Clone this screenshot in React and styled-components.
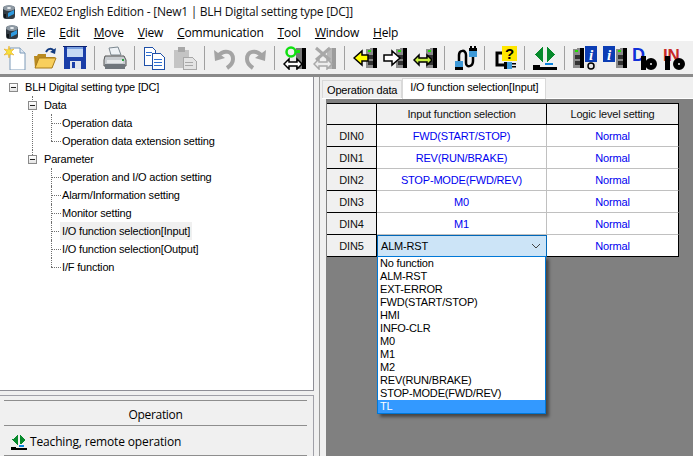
import React from 'react';
import styled, { createGlobalStyle } from 'styled-components';

const GlobalStyle = createGlobalStyle`
  html, body {
    margin: 0;
    padding: 0;
    width: 693px;
    height: 456px;
    overflow: hidden;
    background: #fff;
  }
  * {
    box-sizing: border-box;
  }
`;

const uiFont = `'Liberation Sans', Arial, sans-serif`;
const chromeFont = `'Open Sans', 'Noto Sans', sans-serif`;

const Page = styled.div`
  width: 693px;
  height: 456px;
  display: flex;
  flex-direction: column;
  font-family: ${uiFont};
  font-size: 11px;
  letter-spacing: -0.18px;
  color: #000;
  overflow: hidden;
`;

const TitleBar = styled.div`
  height: 23px;
  display: flex;
  align-items: center;
  gap: 3px;
  padding-left: 1px;
  font-family: ${chromeFont};
  font-size: 12px;
  letter-spacing: -0.26px;
  color: #111;
`;

const MenuBar = styled.div`
  height: 18px;
  display: flex;
  align-items: center;
  padding-left: 4px;
  font-family: ${chromeFont};
  font-size: 12px;
  letter-spacing: -0.2px;
`;

const MenuLogo = styled.div`
  width: 23px;
  display: flex;
`;

const MenuItems = styled.div`
  display: flex;
  gap: 14px;
`;

const Toolbar = styled.div`
  height: 33px;
  display: flex;
  align-items: center;
  background: #f0f0f0;
`;

const ToolButton = styled.div`
  width: 30px;
  height: 32px;
  display: flex;
  align-items: center;
  justify-content: center;
`;

const ToolSeparator = styled.div`
  width: 10px;
  height: 24px;
  display: flex;
  justify-content: center;
  padding-right: 2px;

  &::before {
    content: '';
    width: 1px;
    background: #a0a0a0;
  }
`;

const Body = styled.div`
  flex: 1;
  min-height: 0;
  display: flex;
  border-top: 3px solid #8a8a8a;
  background: #f0f0f0;
`;

const LeftPane = styled.div`
  width: 314px;
  display: flex;
  flex-direction: column;
`;

const TreePanel = styled.div`
  height: 314px;
  background: #fff;
  border-right: 1px solid #8e8e96;
  border-bottom: 1px solid #8e8e96;
  padding: 1px 0 0 9px;
`;

const TreeList = styled.ul`
  list-style: none;
  margin: 0;
  padding: 0;
`;

const TreeChildren = styled(TreeList)`
  margin-left: ${(p) => p.$indent}px;
`;

const TreeItem = styled.li`
  position: relative;

  &::before {
    content: '';
    position: absolute;
    left: 0;
    top: 9px;
    width: ${(p) => p.$tick}px;
    border-top: 1px dotted #707070;
  }

  &::after {
    content: '';
    position: absolute;
    left: 0;
    top: 0;
    bottom: 0;
    border-left: 1px dotted #707070;
  }

  &:last-child::after {
    bottom: auto;
    height: 9px;
  }
`;

const TreeRoot = styled.li`
  position: relative;
`;

const TreeRow = styled.div`
  position: relative;
  z-index: 1;
  height: 18px;
  display: flex;
  align-items: center;
  padding-left: ${(p) => p.$pad}px;
`;

const TreeExpander = styled.span`
  width: 9px;
  height: 9px;
  margin-right: ${(p) => p.$gap}px;
  margin-left: ${(p) => p.$offset || 0}px;
  border: 1px solid #8a8a8a;
  background: linear-gradient(#fff, #e4e4e4);
  display: flex;
  align-items: center;
  justify-content: center;
  flex: none;

  &::before {
    content: '';
    width: 5px;
    height: 1px;
    background: #222;
  }
`;

const TreeLabel = styled.span`
  height: 18px;
  line-height: 18px;
  padding: 0 2px;
  white-space: nowrap;
  background: ${(p) => (p.$selected ? '#f0f0f0' : 'transparent')};
`;

const Footer = styled.div`
  flex: 1;
  margin-top: 4px;
  padding: 4px 6px 0 4px;
  border-top: 1px solid #a0a0a8;
  border-right: 1px solid #a0a0a8;
`;

const FooterHeading = styled.div`
  height: 26px;
  padding-top: 3px;
  border-top: 1px solid #8e8e8e;
  border-bottom: 1px solid #8e8e8e;
  display: flex;
  align-items: center;
  justify-content: center;
  font-family: ${chromeFont};
  font-size: 12px;
  letter-spacing: -0.3px;
`;

const FooterAction = styled.div`
  height: 30px;
  padding: 2px 0 0 7px;
  display: flex;
  align-items: center;
  gap: 3px;
  border-bottom: 1px solid #8e8e8e;
  font-family: ${chromeFont};
  font-size: 12px;
  letter-spacing: -0.15px;
`;

const Splitter = styled.div`
  width: 6px;
  background: #f0f0f0;
  border-right: 1px solid #9a9a9a;
`;

const RightPane = styled.div`
  flex: 1;
  display: flex;
  flex-direction: column;
  padding-left: 2px;
`;

const TabStrip = styled.div`
  height: 22px;
  display: flex;
  align-items: flex-end;
  background: #f0f0f0;
  border-bottom: 1px solid #fff;
`;

const Tab = styled.div`
  height: ${(p) => (p.$active ? 21 : 18)}px;
  padding: ${(p) => (p.$active ? '0 7px 4px' : '0 4px')};
  margin-bottom: ${(p) => (p.$active ? -1 : 0)}px;
  display: flex;
  align-items: center;
  background: ${(p) => (p.$active ? '#fff' : '#f0f0f0')};
  border: 1px solid #d9d9d9;
  border-bottom: none;
  white-space: nowrap;
`;

const Workspace = styled.div`
  flex: 1;
  margin-left: 4px;
  padding: 4px 0 0 1px;
  background: #808080;
`;

const Table = styled.div`
  width: 352px;
  display: grid;
  grid-template-columns: 50px 170px 132px;
  grid-template-rows: 21px;
  grid-auto-rows: 22px;
  border-top: 1px solid #000;
`;

const Cell = styled.div`
  position: relative;
  display: flex;
  align-items: center;
  justify-content: center;
  white-space: nowrap;
  background: #fff;
  color: #0000f0;
  border-right: 1px solid #c0c0c0;
  border-bottom: 1px solid ${(p) => (p.$last ? '#000' : '#c0c0c0')};
`;

const LevelCell = styled(Cell)`
  border-right-color: #000;
`;

const HeaderCell = styled(Cell)`
  background: #f0f0f0;
  color: #111;
  border-right: 1px solid #000;
  border-bottom: 1px solid #000;
`;

const RowHeader = styled(HeaderCell)``;

const ComboCell = styled(Cell)`
  justify-content: space-between;
  padding: 0 5px 0 3px;
  color: #000;
  background: #cce4f7;
  border: 1px solid #0067b8;
  overflow: visible;
`;

const Dropdown = styled.div`
  position: absolute;
  z-index: 5;
  left: -1px;
  top: 20px;
  width: 169px;
  border: 1px solid #0078d7;
  background: #fff;
  box-shadow: 3px 3px 3px rgba(0, 0, 0, 0.45);
`;

const DropdownItem = styled.div`
  height: 13px;
  line-height: 13px;
  padding-left: 2px;
  color: ${(p) => (p.$selected ? '#fff' : '#000')};
  background: ${(p) => (p.$selected ? '#3399ff' : 'transparent')};
`;

/* toolbar pictures, all drawn on a 24x24 grid */

const Device = ({ x = 0, dark = '#000', body = '#8c8c8c', led = '#22e000' }) => (
  <g transform={`translate(${x} 0)`} shapeRendering="crispEdges">
    <path d="M3 3h4v-1h7v20H3z" fill={body} />
    <rect x="10" y="2" width="4" height="20" fill={dark} />
    <rect x="5" y="4" width="3" height="2" fill={led} />
    <rect x="5" y="9" width="5" height="4" fill="#333" />
    <rect x="5" y="15" width="5" height="4" fill="#333" />
  </g>
);

const Motor = ({ size = 16 }) => (
  <svg width={size} height={size} viewBox="0 0 16 16">
    <rect x="2" y="2" width="12" height="13" rx="3" fill="#333c44" />
    <ellipse cx="8" cy="4" rx="6" ry="3" fill="#8d98a2" />
    <ellipse cx="8" cy="4" rx="2" ry="1" fill="#eef2f5" />
    <path d="M7 9l6-3v4l-6 3z" fill="#2f9be0" />
    <rect x="3" y="10" width="2" height="4" fill="#10161a" />
  </svg>
);

const TeachIcon = ({ size = 24 }) => (
  <svg width={size} height={size} viewBox="0 0 24 24" shapeRendering="crispEdges">
    <path d="M10 1v15L2 8.500z" fill="#078a2c" />
    <path d="M14 1v15l8-7.500z" fill="#078a2c" />
    <rect x="12" y="17" width="8" height="2" fill="#0a84e0" />
    <rect x="0" y="19" width="7" height="5" fill="#000" />
    <rect x="7" y="21" width="17" height="3" fill="#000" />
  </svg>
);

const icons = {
  fresh: (
    <>
      <path d="M7 2h10l5 5v17H7z" fill="#fff" stroke="#7c9ab8" />
      <path d="M17 2v5h5" fill="#dfe8f2" stroke="#7c9ab8" />
      <path d="M6 0l1 4 4-1-3 3 3 3-4-1-1 4-1-4-4 1 3-3-3-3 4 1z" fill="#f6e03a" stroke="#e4a010" strokeWidth="0.5" />
    </>
  ),
  open: (
    <>
      <path d="M2 22L1 10h3l1-2h8v3h9l-3 11z" fill="#b98a20" />
      <path d="M2 22l4-10h17l-4 10z" fill="#f8cf5c" stroke="#a87a18" />
      <path d="M13 6c2-4 6-4 8-1" fill="none" stroke="#123a80" strokeWidth="2" />
      <path d="M23 2l-1 6-5-2z" fill="#123a80" />
    </>
  ),
  save: (
    <g shapeRendering="crispEdges">
      <rect x="1" y="1" width="22" height="22" fill="#1a3ea8" />
      <rect x="0" y="0" width="24" height="1" fill="#0b2270" />
      <rect x="4" y="1" width="16" height="10" fill="#c4d8f4" />
      <rect x="4" y="1" width="16" height="2" fill="#7aa0e0" />
      <rect x="7" y="15" width="11" height="8" fill="#dfe4ee" />
      <rect x="9" y="16" width="3" height="6" fill="#1a3ea8" />
    </g>
  ),
  print: (
    <>
      <path d="M6 2l9-1 3 8H8z" fill="#eef2f6" stroke="#7c8890" />
      <path d="M2 10h19l2 4v6H1v-6z" fill="#c8ccd0" stroke="#555" />
      <rect x="2" y="18" width="20" height="5" fill="#70767c" />
      <rect x="4" y="14" width="16" height="3" fill="#e6e8ea" />
      <rect x="19" y="13" width="2" height="2" fill="#2ca040" />
    </>
  ),
  copy: (
    <g shapeRendering="crispEdges">
      <path d="M1 1h8l3 3v15H1z" fill="#fff" stroke="#1f50a8" />
      <path d="M9 7h8l4 4v12H9z" fill="#fff" stroke="#1f50a8" />
      <rect x="3" y="6" width="6" height="1" fill="#2f6fd0" />
      <rect x="3" y="9" width="5" height="1" fill="#2f6fd0" />
      <rect x="11" y="13" width="8" height="1" fill="#2f6fd0" />
      <rect x="11" y="16" width="8" height="1" fill="#2f6fd0" />
      <rect x="11" y="19" width="8" height="1" fill="#2f6fd0" />
    </g>
  ),
  paste: (
    <g shapeRendering="crispEdges">
      <rect x="1" y="4" width="15" height="18" fill="#c4c4c4" />
      <rect x="5" y="1" width="7" height="5" fill="#a8a8a8" />
      <path d="M10 11h9l4 4v8H10z" fill="#e4e4e4" stroke="#a8a8a8" />
      <rect x="12" y="16" width="8" height="1" fill="#a8a8a8" />
      <rect x="12" y="19" width="8" height="1" fill="#a8a8a8" />
    </g>
  ),
  undo: (
    <>
      <path d="M5 10c6-7 15-5 15 3 0 4-3 7-6 9" fill="none" stroke="#a4a4a4" strokeWidth="4" />
      <path d="M1 4l1 11 10-3z" fill="#a4a4a4" />
    </>
  ),
  redo: (
    <>
      <path d="M19 10c-6-7-15-5-15 3 0 4 3 7 6 9" fill="none" stroke="#a4a4a4" strokeWidth="4" />
      <path d="M23 4l-1 11-10-3z" fill="#a4a4a4" />
    </>
  ),
  connect: (
    <>
      <rect x="13" y="2" width="10" height="21" fill="#777" />
      <rect x="19" y="2" width="4" height="21" fill="#000" />
      <rect x="14" y="4" width="3" height="2" fill="#22e000" />
      <circle cx="8" cy="6" r="4.500" fill="none" stroke="#10e010" strokeWidth="2.500" />
      <rect x="12" y="5" width="5" height="2" fill="#10e010" />
      <path d="M1 18l5-5v3h8v-3l5 5-5 5v-3H6v3z" fill="#fff" stroke="#000" strokeWidth="1.500" />
    </>
  ),
  disconnect: (
    <>
      <rect x="14" y="2" width="9" height="21" fill="#b8b8b8" />
      <rect x="19" y="2" width="4" height="21" fill="#9c9c9c" />
      <path d="M3 2l14 12M17 2L3 14" stroke="#a8a8a8" strokeWidth="3" />
      <path d="M1 18l5-5v3h8v-3l5 5-5 5v-3H6v3z" fill="#ececec" stroke="#a8a8a8" strokeWidth="1.500" />
    </>
  ),
  read: (
    <>
      <Device x={10} />
      <path d="M1 12l8-7v4h6v6H9v4z" fill="#ffff00" stroke="#000" strokeWidth="1.500" />
    </>
  ),
  write: (
    <>
      <Device x={10} />
      <path d="M17 12l-8-7v4H1v6h8v4z" fill="#fff" stroke="#000" strokeWidth="1.500" />
    </>
  ),
  compare: (
    <>
      <Device x={10} />
      <path d="M1 14l5-5v3h8V9l5 5-5 5v-3H6v3z" fill="#c8f040" stroke="#000" strokeWidth="1.500" />
    </>
  ),
  cable: (
    <>
      <path d="M6 16V9c0-5 7-6 7 0v8c0 5 7 4 7-2v-6" fill="none" stroke="#000" strokeWidth="2.500" />
      <g shapeRendering="crispEdges">
        <rect x="2" y="15" width="8" height="6" fill="#3f9ad8" />
        <rect x="2" y="21" width="8" height="3" fill="#000" />
        <rect x="16" y="5" width="8" height="6" fill="#3f9ad8" />
        <rect x="16" y="2" width="8" height="3" fill="#000" />
        <rect x="17" y="0" width="2" height="2" fill="#000" />
        <rect x="21" y="0" width="2" height="2" fill="#000" />
      </g>
    </>
  ),
  help: (
    <>
      <path d="M9 7H4v12h8" fill="none" stroke="#000" strokeWidth="3" />
      <rect x="9" y="0" width="15" height="15" fill="#ffe600" />
      <text x="16.500" y="13" textAnchor="middle" fontSize="15" fontWeight="700" fontFamily="'Liberation Sans', sans-serif">?</text>
      <rect x="11" y="16" width="8" height="7" fill="#000" />
      <rect x="14" y="16" width="5" height="7" fill="#3f9ad8" />
      <rect x="19" y="17" width="4" height="1.500" fill="#000" />
      <rect x="19" y="20" width="4" height="1.500" fill="#000" />
    </>
  ),
  teach: <TeachIcon />,
  monitor: (
    <>
      <Device x={-3} />
      <rect x="12" y="0" width="12" height="16" fill="#0b3db4" />
      <text x="18" y="14" textAnchor="middle" fontSize="15" fontWeight="700" fontStyle="italic" fill="#fff" fontFamily="'Liberation Serif', serif">i</text>
      <rect x="12" y="16" width="12" height="8" fill="#e8e8e8" />
      <circle cx="18" cy="20" r="3" fill="none" stroke="#000" strokeWidth="1.500" />
    </>
  ),
  info: (
    <>
      <Device x={10} />
      <rect x="0" y="0" width="12" height="16" fill="#0b3db4" />
      <text x="6" y="14" textAnchor="middle" fontSize="15" fontWeight="700" fontStyle="italic" fill="#fff" fontFamily="'Liberation Serif', serif">i</text>
    </>
  ),
  digital: (
    <>
      <text x="-1" y="15" fontSize="18" fontWeight="700" fill="#1030d8" fontFamily="'Liberation Sans', sans-serif">D</text>
      <rect x="8" y="10" width="5" height="14" fill="#000" />
      <circle cx="18" cy="18" r="3.500" fill="none" stroke="#000" strokeWidth="5" />
    </>
  ),
  input: (
    <>
      <text x="0" y="15" fontSize="17" fontWeight="700" fill="#c82828" fontFamily="'Liberation Sans', sans-serif">IN</text>
      <rect x="2" y="10" width="5" height="14" fill="#000" />
      <circle cx="16" cy="18" r="3.500" fill="none" stroke="#000" strokeWidth="5" />
    </>
  ),
};

const toolbarGroups = [
  ['fresh', 'open', 'save'],
  ['print'],
  ['copy', 'paste'],
  ['undo', 'redo'],
  ['connect', 'disconnect'],
  ['read', 'write', 'compare'],
  ['cable'],
  ['help'],
  ['teach'],
  ['monitor', 'info', 'digital', 'input'],
];

const menus = [
  ['F', 'ile'],
  ['E', 'dit'],
  ['M', 'ove'],
  ['V', 'iew'],
  ['C', 'ommunication'],
  ['T', 'ool'],
  ['W', 'indow'],
  ['H', 'elp'],
];

const rows = [
  ['DIN0', 'FWD(START/STOP)'],
  ['DIN1', 'REV(RUN/BRAKE)'],
  ['DIN2', 'STOP-MODE(FWD/REV)'],
  ['DIN3', 'M0'],
  ['DIN4', 'M1'],
];

const options = [
  'No function',
  'ALM-RST',
  'EXT-ERROR',
  'FWD(START/STOP)',
  'HMI',
  'INFO-CLR',
  'M0',
  'M1',
  'M2',
  'REV(RUN/BRAKE)',
  'STOP-MODE(FWD/REV)',
  'TL',
];

const dataItems = ['Operation data', 'Operation data extension setting'];
const parameterItems = [
  'Operation and I/O action setting',
  'Alarm/Information setting',
  'Monitor setting',
  'I/O function selection[Input]',
  'I/O function selection[Output]',
  'I/F function',
];

const Leaves = ({ items }) => (
  <TreeChildren $indent={19}>
    {items.map((item) => (
      <TreeItem key={item} $tick={10}>
        <TreeRow $pad={9}>
          <TreeLabel $selected={item.endsWith('[Input]')}>{item}</TreeLabel>
        </TreeRow>
      </TreeItem>
    ))}
  </TreeChildren>
);

const Branch = ({ label, items }) => (
  <TreeItem $tick={0}>
    <TreeRow $pad={0}>
      <TreeExpander $offset={-4} $gap={5} />
      <TreeLabel>{label}</TreeLabel>
    </TreeRow>
    <Leaves items={items} />
  </TreeItem>
);

export default function App() {
  return (
    <Page>
      <GlobalStyle />
      <TitleBar>
        <Motor />
        MEXE02 English Edition - [New1 | BLH Digital setting type [DC]]
      </TitleBar>
      <MenuBar>
        <MenuLogo>
          <Motor />
        </MenuLogo>
        <MenuItems>
          {menus.map(([key, rest]) => (
            <span key={key}>
              <u>{key}</u>
              {rest}
            </span>
          ))}
        </MenuItems>
      </MenuBar>
      <Toolbar>
        {toolbarGroups.map((group, i) => (
          <React.Fragment key={group[0]}>
            {i > 0 && <ToolSeparator />}
            {group.map((name) => (
              <ToolButton key={name}>
                <svg width="24" height="24" viewBox="0 0 24 24">
                  {icons[name]}
                </svg>
              </ToolButton>
            ))}
          </React.Fragment>
        ))}
      </Toolbar>
      <Body>
        <LeftPane>
          <TreePanel>
            <TreeList>
              <TreeRoot>
                <TreeRow $pad={0}>
                  <TreeExpander $gap={5} />
                  <TreeLabel>BLH Digital setting type [DC]</TreeLabel>
                </TreeRow>
                <TreeChildren $indent={23}>
                  <Branch label="Data" items={dataItems} />
                  <Branch label="Parameter" items={parameterItems} />
                </TreeChildren>
              </TreeRoot>
            </TreeList>
          </TreePanel>
          <Footer>
            <FooterHeading>Operation</FooterHeading>
            <FooterAction>
              <TeachIcon size={16} />
              Teaching, remote operation
            </FooterAction>
          </Footer>
        </LeftPane>
        <Splitter />
        <RightPane>
          <TabStrip>
            <Tab>Operation data</Tab>
            <Tab $active>I/O function selection[Input]</Tab>
          </TabStrip>
          <Workspace>
            <Table>
              <HeaderCell />
              <HeaderCell>Input function selection</HeaderCell>
              <HeaderCell>Logic level setting</HeaderCell>
              {rows.map(([din, fn]) => (
                <React.Fragment key={din}>
                  <RowHeader>{din}</RowHeader>
                  <Cell>{fn}</Cell>
                  <LevelCell>Normal</LevelCell>
                </React.Fragment>
              ))}
              <RowHeader>DIN5</RowHeader>
              <ComboCell>
                ALM-RST
                <svg width="10" height="6" viewBox="0 0 10 6">
                  <path d="M1 1l4 4 4-4" fill="none" stroke="#444" />
                </svg>
                <Dropdown>
                  {options.map((o) => (
                    <DropdownItem key={o} $selected={o === 'TL'}>
                      {o}
                    </DropdownItem>
                  ))}
                </Dropdown>
              </ComboCell>
              <LevelCell $last>Normal</LevelCell>
            </Table>
          </Workspace>
        </RightPane>
      </Body>
    </Page>
  );
}
